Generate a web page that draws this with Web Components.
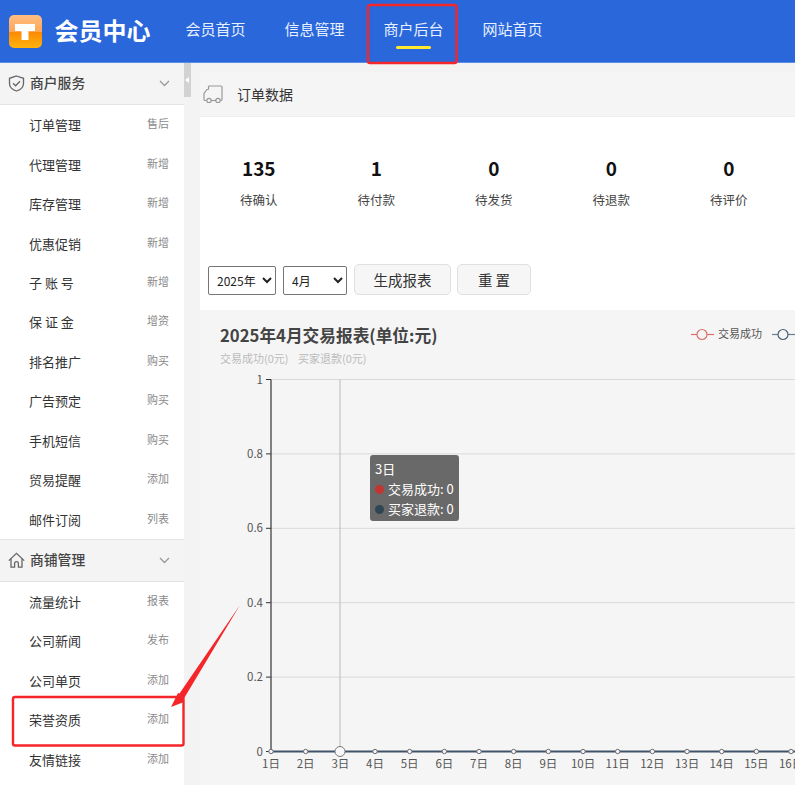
<!DOCTYPE html>
<html lang="zh">
<head>
<meta charset="utf-8">
<title>会员中心</title>
<style>
  html, body { margin: 0; height: 785px; overflow: hidden; background: #f3f3f3; }
  body { font-family: "Noto Sans CJK SC", "Open Sans", sans-serif; position: relative; }
  .body-row { display: flex; align-items: flex-start; }
</style>
</head>
<body>
<member-header></member-header>
<div class="body-row">
  <side-menu>
    <side-group title="商户服务" icon="shield">
      <side-item action="售后">订单管理</side-item>
      <side-item action="新增">代理管理</side-item>
      <side-item action="新增">库存管理</side-item>
      <side-item action="新增">优惠促销</side-item>
      <side-item action="新增">子 账 号</side-item>
      <side-item action="增资">保 证 金</side-item>
      <side-item action="购买">排名推广</side-item>
      <side-item action="购买">广告预定</side-item>
      <side-item action="购买">手机短信</side-item>
      <side-item action="添加">贸易提醒</side-item>
      <side-item action="列表">邮件订阅</side-item>
    </side-group>
    <side-group title="商铺管理" icon="home">
      <side-item action="报表">流量统计</side-item>
      <side-item action="发布">公司新闻</side-item>
      <side-item action="添加">公司单页</side-item>
      <side-item action="添加">荣誉资质</side-item>
      <side-item action="添加">友情链接</side-item>
    </side-group>
  </side-menu>
  <order-panel></order-panel>
</div>
<red-marks></red-marks>

<script>
  const BLUE = '#2967db'

  customElements.define('member-header',
    class extends HTMLElement {
      constructor() {
        super()
        const shadow = this.attachShadow({ mode: 'open' })
        const items = ['会员首页', '信息管理', '商户后台', '网站首页']
        shadow.innerHTML = `
          <style>
            :host { display: flex; align-items: center; height: 62px; background: ${BLUE}; border-bottom: 1px solid #5b8ce6; color: #fff; }
            .logo { width: 33px; height: 33px; margin-left: 9px; flex: none; }
            h1 { margin: -3px 0 0 12.500px; width: 96px; font-size: 24px; line-height: 34px; font-weight: 700; white-space: nowrap; }
            nav { display: flex; margin-left: 15.500px; height: 62px; }
            a { position: relative; width: 60px; padding: 0 19.5px 6px; display: flex; align-items: center; justify-content: center; font-size: 15px; color: #e8f0ff; white-space: nowrap; box-sizing: content-box; height: 56px; }
            a.on::after { content: ''; position: absolute; left: 50%; bottom: 13px; width: 35px; height: 3px; margin-left: -18px; border-radius: 2px; background: #ffe92e; }
          </style>
          <svg class="logo" viewBox="0 0 33 33">
            <defs><linearGradient id="lg" x1="0" y1="0" x2="0" y2="1">
              <stop offset="0" stop-color="#ffbe85"/><stop offset=".5" stop-color="#ffa654"/>
              <stop offset=".52" stop-color="#fb8a02"/><stop offset="1" stop-color="#ffb30f"/>
            </linearGradient></defs>
            <rect width="33" height="33" rx="5" fill="url(#lg)"/>
            <path d="M6 9h20v7h-6.500v9h-7v-9H6z" fill="#fff"/>
          </svg>
          <h1>会员中心</h1>
          <nav>${items.map((t, i) => `<a class="${i === 2 ? 'on' : ''}">${t}</a>`).join('')}</nav>
        `
      }
    }
  )

  customElements.define('side-menu',
    class extends HTMLElement {
      constructor() {
        super()
        this.attachShadow({ mode: 'open' }).innerHTML = `
          <style>
            :host { display: block; position: relative; width: 184px; height: 722px; background: #fff; flex: none; margin-right: 16px; }
            .handle { position: absolute; left: 184px; top: 0; width: 7px; height: 34px; background: #d2d2d2; }
            .handle::after { content: ''; position: absolute; left: 1px; top: 14px; border: 3px solid transparent; border-left: 0; border-right: 4px solid #fff; }
          </style>
          <slot></slot>
          <div class="handle"></div>
        `
      }
    }
  )

  const GROUP_ICONS = {
    shield: '<path d="M8.500 1l7 2.300v5.200c0 3.800-3 6.300-7 7.500-4-1.200-7-3.700-7-7.500V3.300z"/><path d="M5 8.300l2.600 2.500L12 6.200"/>',
    home: '<path d="M.8 8.600L8.500 1.400l7.700 7.200"/><path d="M3 6.800v8.400h3.600v-3.700a1.900 1.900 0 0 1 3.800 0v3.700H14V6.800"/>'
  }

  customElements.define('side-group',
    class extends HTMLElement {
      constructor() {
        super()
        const shadow = this.attachShadow({ mode: 'open' })
        shadow.innerHTML = `
          <style>
            :host { display: block; }
            header { display: flex; align-items: center; height: 41px; padding: 0 14px 0 8px; background: #f4f4f4; border-bottom: 1px solid #e3e3e3; color: #444; font-size: 13.8px; font-weight: 500; }
            :host(:not(:first-child)) header { height: 41px; border-top: 1px solid #e3e3e3; }
            .icon { width: 17px; height: 17px; margin-right: 5px; fill: none; stroke: #666; stroke-width: 1.3; }
            span { flex: 1; margin-top: -3px; }
            .chev { width: 11px; height: 7px; fill: none; stroke: #999; stroke-width: 1.3; }
          </style>
          <header>
            <svg class="icon" viewBox="0 0 17 17">${GROUP_ICONS[this.getAttribute('icon')]}</svg>
            <span>${this.getAttribute('title')}</span>
            <svg class="chev" viewBox="0 0 11 7"><path d="M1 1l4.5 4.5L10 1"/></svg>
          </header>
          <slot></slot>
        `
      }
    }
  )

  customElements.define('side-item',
    class extends HTMLElement {
      constructor() {
        super()
        this.attachShadow({ mode: 'open' }).innerHTML = `
          <style>
            :host { display: flex; align-items: center; justify-content: space-between; height: 39.45px; padding: 0 15px 0 29px; font-size: 13px; color: #333; white-space: pre; }
            i { font-style: normal; font-size: 11px; color: #8a8a8a; margin-top: -3px; }
          </style>
          <span><slot></slot></span>
          <i>${this.getAttribute('action')}</i>
        `
      }
    }
  )

  customElements.define('stat-card',
    class extends HTMLElement {
      constructor() {
        super()
        this.attachShadow({ mode: 'open' }).innerHTML = `
          <style>
            :host { display: flex; flex-direction: column; align-items: center; width: 117.5px; color: #333; }
            b { font-size: 19px; line-height: 28px; color: #111; font-weight: 700; margin-top: -1px; }
            span { margin-top: 8px; font-size: 12.5px; line-height: 20px; color: #444; }
          </style>
          <b>${this.getAttribute('value')}</b>
          <span>${this.getAttribute('label')}</span>
        `
      }
    }
  )

  customElements.define('order-panel',
    class extends HTMLElement {
      constructor() {
        super()
        const months = Array.from({ length: 12 }, (_, i) => `<option${i === 3 ? ' selected' : ''}>${i + 1}月</option>`).join('')
        this.attachShadow({ mode: 'open' }).innerHTML = `
          <style>
            :host { display: block; width: 595px; flex: none; margin-top: 9px; }
            .title { display: flex; align-items: center; height: 44px; padding-left: 3px; background: #f5f5f5; border-bottom: 1px solid #eee; font-size: 14px; color: #333; }
            .title svg { width: 20px; height: 18px; margin-right: 14px; fill: none; stroke: #999; stroke-width: 1.2; }
            .body { background: #fff; height: 193px; box-sizing: border-box; }
            .stats { display: flex; padding-top: 38px; height: 109px; box-sizing: content-box; }
            .tools { display: flex; align-items: flex-start; padding: 0 0 0 8px; }
            select { height: 29px; margin: 2px 7px 0 0; box-sizing: border-box; border: 1px solid #767676; border-radius: 2px; background: #fff; font: 12px "Noto Sans CJK SC", "Open Sans", sans-serif; color: #222; padding-left: 4px; }
            .y { width: 68px; } .m { width: 64px; }
            button { height: 31px; margin-right: 6px; padding: 0; border: 1px solid #e0e0e0; border-radius: 5px; background: #f6f6f6; font: 14.5px "Noto Sans CJK SC", sans-serif; color: #333; white-space: pre; }
            .gen { width: 97px; } .rst { width: 74px; }
          </style>
          <div class="title">
            <svg viewBox="0 0 20 18"><path d="M5.500 4.500V2a1 1 0 0 1 1-1H18a1 1 0 0 1 1 1v12.500a1 1 0 0 1-1 1h-.5"/><path d="M5.500 4.500H4L1 8.500v6a1 1 0 0 0 1 1h1.500"/><circle cx="6" cy="15.500" r="2.200"/><circle cx="15" cy="15.500" r="2.200"/><path d="M8.200 15.500h4.600"/></svg>
            订单数据
          </div>
          <div class="body">
            <div class="stats">
              <stat-card value="135" label="待确认"></stat-card>
              <stat-card value="1" label="待付款"></stat-card>
              <stat-card value="0" label="待发货"></stat-card>
              <stat-card value="0" label="待退款"></stat-card>
              <stat-card value="0" label="待评价"></stat-card>
            </div>
            <div class="tools">
              <select class="y"><option>2025年</option></select>
              <select class="m">${months}</select>
              <button class="gen">生成报表</button>
              <button class="rst">重 置</button>
            </div>
          </div>
          <report-chart></report-chart>
        `
      }
    }
  )

  customElements.define('report-chart',
    class extends HTMLElement {
      constructor() {
        super()
        const shadow = this.attachShadow({ mode: 'open' })
        // svg origin sits at the panel corner: page x - 200, page y - 310
        const left = 71, top = 69.5, stepY = 74.4, stepX = 34.67
        const bottom = top + stepY * 5
        let grid = ''
        const yLabels = ['1', '0.8', '0.6', '0.4', '0.2', '0']
        yLabels.forEach((label, i) => {
          const y = top + stepY * i
          if (i < 5) grid += `<line x1="${left}" x2="600" y1="${y}" y2="${y}" stroke="#d9d9d9"/>`
          grid += `<line x1="${left - 5}" x2="${left}" y1="${y}" y2="${y}" stroke="#333"/>`
          grid += `<text x="${left - 8}" y="${y + 4}" text-anchor="end" class="tick">${label}</text>`
        })
        let days = ''
        for (let d = 0; d < 16; d++) {
          const x = left + stepX * d
          days += `<text x="${x}" y="${bottom + 16}" text-anchor="middle" class="tick">${d + 1}日</text>`
          if (d !== 2) days += `<circle cx="${x}" cy="${bottom}" r="2.200" fill="#f5f5f5" stroke="#6f6a76"/>`
        }
        shadow.innerHTML = `
          <style>
            :host { display: block; position: relative; height: 475px; background: #f5f5f5; overflow: hidden; }
            svg { display: block; width: 595px; height: 475px; }
            .tick { font-size: 11.5px; fill: #555; }
            .main { font-size: 16.7px; font-weight: 700; fill: #444; }
            .sub { font-size: 11px; fill: #bbb; }
            .leg { font-size: 11px; fill: #555; }
            .tip { position: absolute; left: 170px; top: 145px; width: 89px; height: 66px; box-sizing: border-box; padding: 4px 5px; border-radius: 3px; background: rgba(80,80,80,.85); color: #fff; font-size: 13px; line-height: 20px; white-space: nowrap; }
            .tip div { display: flex; align-items: center; }
            .tip i { width: 9px; height: 9px; border-radius: 50%; margin-right: 4px; flex: none; }
          </style>
          <svg viewBox="0 0 595 475">
            <text x="20" y="32" class="main">2025年4月交易报表(单位:元)</text>
            <text x="20" y="53" class="sub">交易成功(0元)</text>
            <text x="98" y="53" class="sub">买家退款(0元)</text>
            <g fill="#f5f5f5" stroke-width="1.2">
              <path d="M491 24.500h23" stroke="#d9706c"/><circle cx="502" cy="24.500" r="5" stroke="#d9706c"/>
              <path d="M572 24.500h23" stroke="#6b7f92"/><circle cx="583" cy="24.500" r="5" stroke="#4a6278"/>
            </g>
            <text x="518" y="28" class="leg">交易成功</text>
            ${grid}
            <line x1="140" x2="140" y1="${top}" y2="${bottom}" stroke="#bbb"/>
            <line x1="${left}" x2="${left}" y1="${top}" y2="${bottom}" stroke="#333" stroke-width="1.200"/>
            <line x1="${left}" x2="600" y1="${bottom}" y2="${bottom}" stroke="#3f5468" stroke-width="2.200"/>
            ${days}
            <circle cx="140" cy="${bottom}" r="5" fill="#f8f8f8" stroke="#777"/>
          </svg>
          <div class="tip">
            3日
            <div><i style="background:#c23531"></i>交易成功: 0</div>
            <div><i style="background:#2f4554"></i>买家退款: 0</div>
          </div>
        `
      }
    }
  )

  // the red hand-drawn marks lie over the page
  customElements.define('red-marks',
    class extends HTMLElement {
      constructor() {
        super()
        this.attachShadow({ mode: 'open' }).innerHTML = `
          <style>
            :host { position: absolute; left: 0; top: 0; width: 795px; height: 785px; pointer-events: none; }
            svg { width: 795px; height: 785px; display: block; }
          </style>
          <svg viewBox="0 0 795 785" fill="none" stroke="#f5262a" stroke-width="2.4">
            <rect x="368" y="5" width="88.500" height="58" rx="2"/>
            <rect x="13" y="697" width="170.500" height="48.500" rx="2"/>
            <path d="M240 605L179.500 693.500 178 693 171 707 184 702 183 700z" fill="#f5262a" stroke="none"/>
          </svg>
        `
      }
    }
  )
</script>
</body>
</html>
